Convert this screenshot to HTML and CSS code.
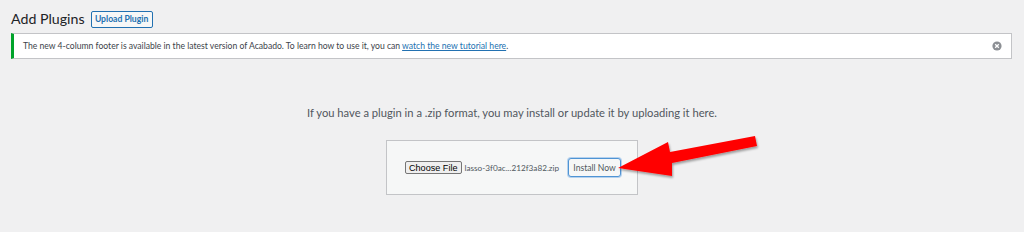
FILE: index.html
```html
<!DOCTYPE html>
<html>
<head>
<meta charset="utf-8">
<link rel="stylesheet" href="styles.css">
</head>
<body>
<div class="wrap">
  <div class="header">
    <h1 class="title">Add Plugins</h1>
    <span class="btn-upload">Upload Plugin</span>
  </div>
  <div class="notice">
    <p class="notice-text">The new 4-column footer is available in the latest version of Acabado. To learn how to use it, you can <a class="link" href="#">watch the new tutorial here</a>.</p>
    <span class="dismiss">
      <svg width="10" height="10" viewBox="0 0 10 10"><circle cx="5" cy="5" r="4.6" fill="#8c8f94"/><path d="M3.2 3.2 L6.8 6.8 M6.8 3.2 L3.2 6.8" stroke="#fff" stroke-width="1.3"/></svg>
    </span>
  </div>
  <p class="help">If you have a plugin in a .zip format, you may install or update it by uploading it here.</p>
  <div class="upload-box">
    <span class="file-btn">Choose File</span>
    <span class="file-name">lasso-3f0ac...212f3a82.zip</span>
    <span class="btn-install">Install Now</span>
  </div>
</div>
<svg class="arrow" width="160" height="60" viewBox="610 128 160 60">
  <defs>
    <filter id="sh" x="-20%" y="-20%" width="140%" height="160%">
      <feDropShadow dx="1" dy="2" stdDeviation="1.2" flood-color="#000" flood-opacity="0.35"/>
    </filter>
  </defs>
  <polygon filter="url(#sh)" fill="#ff0000" points="618,168 668,142 670,152 755,136 757,146 672,163 672,176"/>
</svg>
</body>
</html>
```
FILE: styles.css
```css
html, body {
  margin: 0;
  padding: 0;
  background: #f0f0f1;
  font-family: Lato, "Noto Sans", sans-serif;
  color: #3c434a;
}
.wrap {
  padding: 0 11px 0 11px;
}
.header {
  display: flex;
  align-items: center;
  gap: 6px;
  padding-top: 10px;
  height: 18px;
}
.title {
  margin: 0;
  font-size: 14.2px;
  font-weight: 400;
  color: #1d2327;
  line-height: 18px;
}
.btn-upload {
  display: inline-flex;
  align-items: center;
  justify-content: center;
  width: 60px;
  height: 15px;
  border: 1px solid #2271b1;
  border-radius: 2px;
  background: #f6f7f7;
  color: #2271b1;
  font-size: 8.6px;
  font-weight: 700;
}
.notice {
  margin-top: 5px;
  height: 24px;
  background: #fff;
  border: 1px solid #c3c4c7;
  border-left: 3px solid #00a32a;
  display: flex;
  align-items: center;
  justify-content: space-between;
  padding: 0 10px 0 9px;
  box-sizing: content-box;
  width: 978px;
}
.notice-text {
  margin: 0;
  font-size: 8.6px;
  color: #3c434a;
}
.link {
  color: #2271b1;
  text-decoration: underline;
}
.dismiss {
  display: flex;
  margin-right: -1px;
}
.help {
  margin: 46px 0 0 0;
  text-align: center;
  font-size: 11.2px;
  color: #50575e;
  line-height: 16px;
}
.upload-box {
  width: 252px;
  height: 55px;
  margin: 19px auto 0 auto;
  background: #f6f7f7;
  border: 1px solid #c3c4c7;
  display: flex;
  align-items: center;
  padding: 0 0 0 18px;
  box-sizing: border-box;
}
.file-btn {
  display: inline-flex;
  align-items: center;
  height: 11px;
  padding: 0 3px;
  border: 1px solid #767676;
  border-radius: 2px;
  background: #efefef;
  color: #000;
  font-family: "Liberation Sans", Arial, sans-serif;
  font-size: 9.1px;
}
.file-name {
  margin-left: 3px;
  font-size: 8.2px;
  color: #50575e;
}
.btn-install {
  margin-left: 9px;
  display: inline-flex;
  align-items: center;
  justify-content: center;
  width: 51px;
  height: 17px;
  border: 1px solid #4f94d4;
  box-shadow: 0 0 0 1px #b6d2ee;
  border-radius: 3px;
  background: #f6f7f7;
  color: #50575e;
  font-size: 8.6px;
}
.arrow {
  position: absolute;
  left: 610px;
  top: 128px;
}
```
